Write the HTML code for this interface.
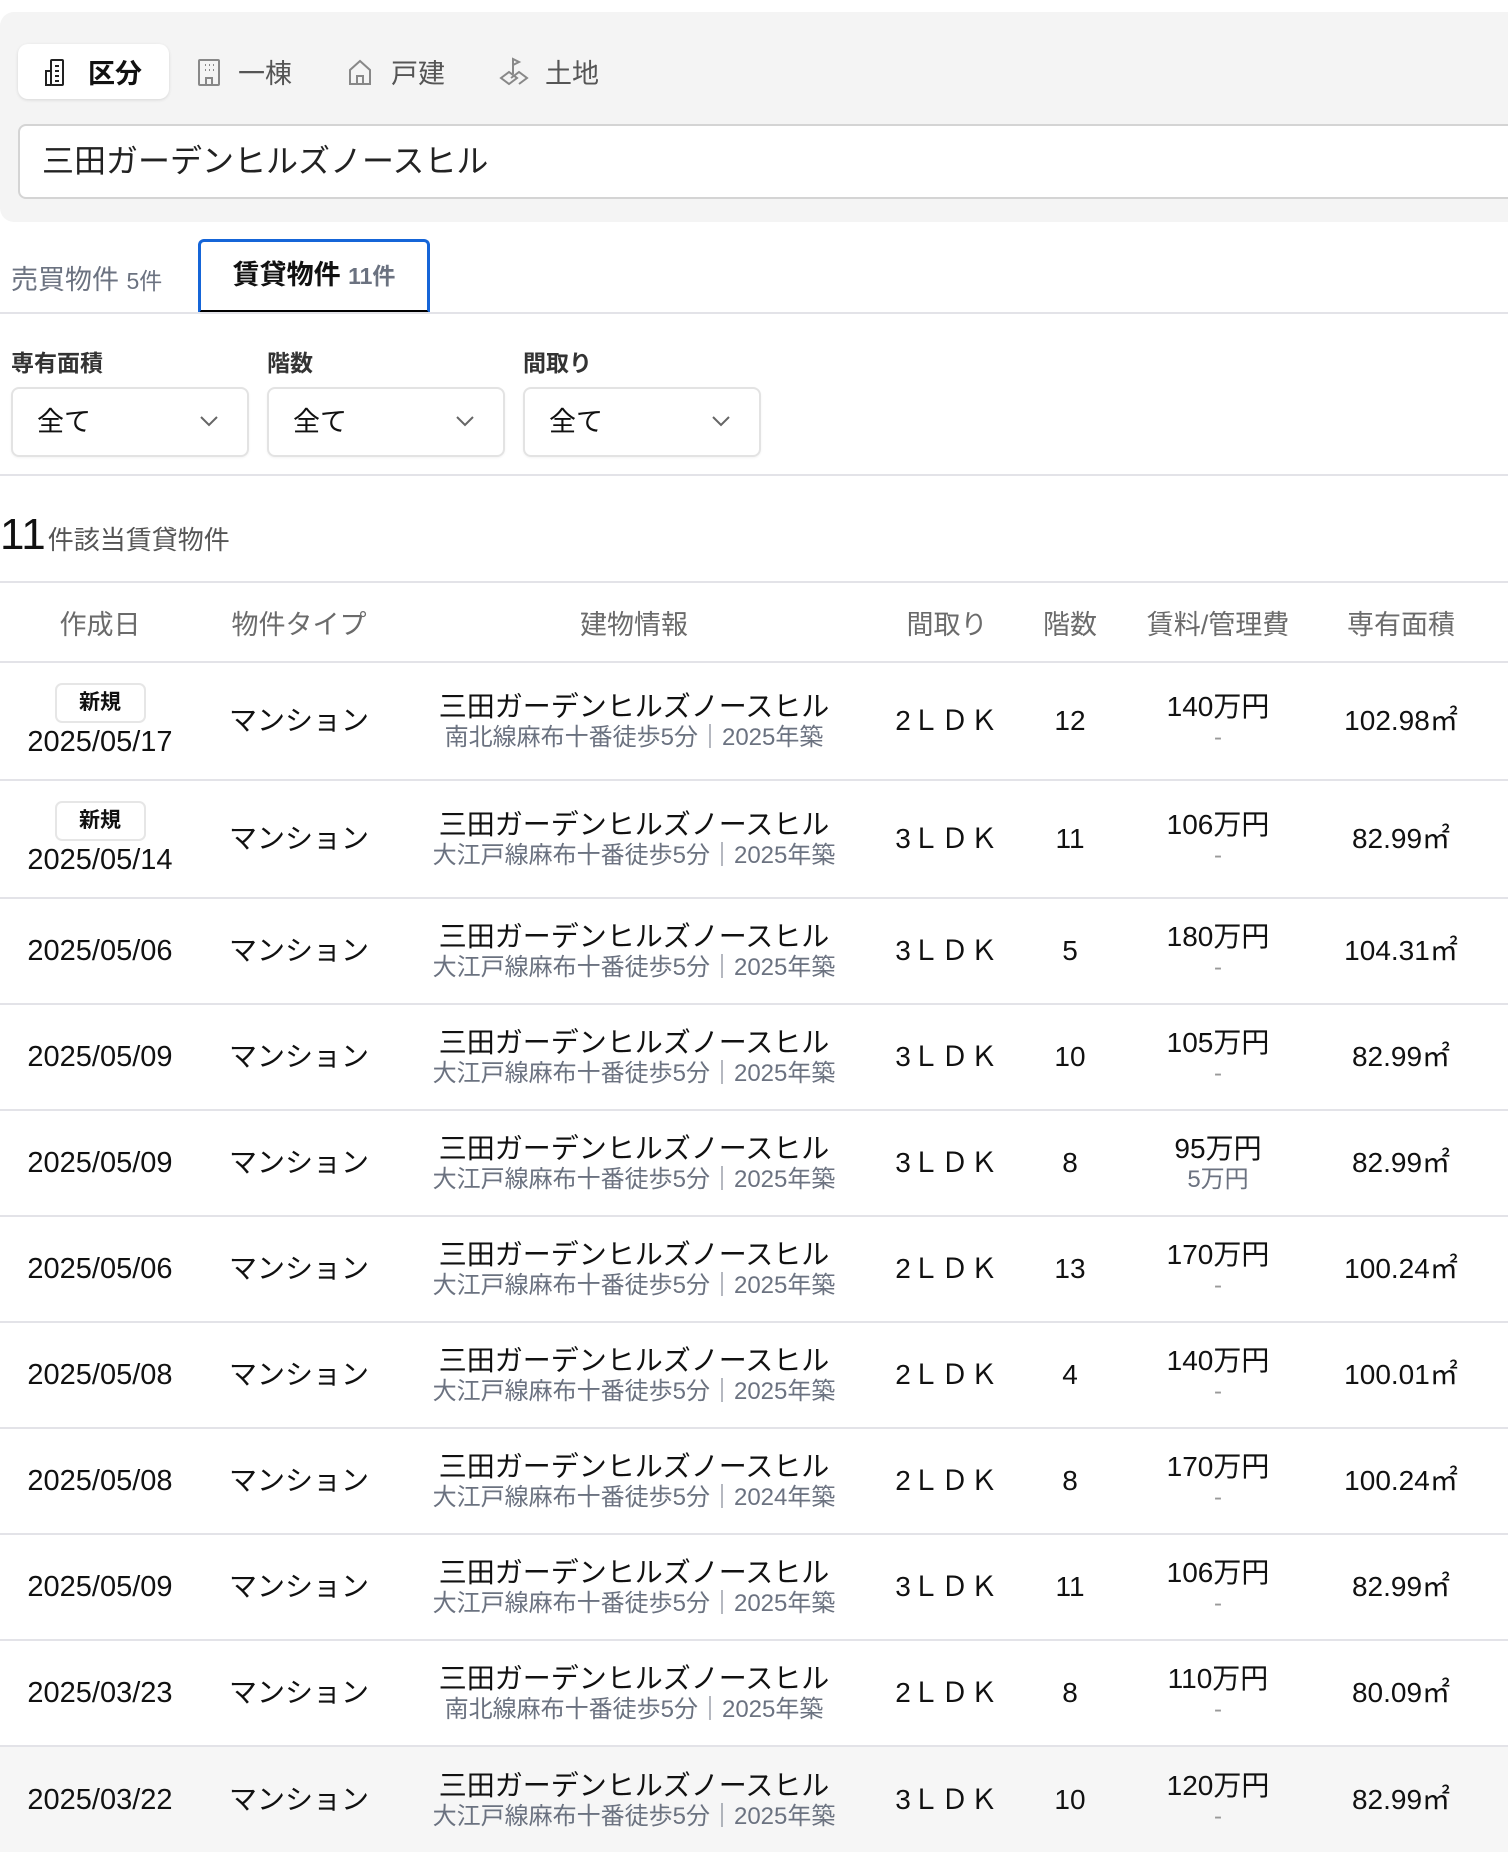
<!DOCTYPE html>
<html><head><meta charset="utf-8"><style>
*{box-sizing:border-box;margin:0;padding:0}
body{width:1508px;height:1852px;overflow:hidden;background:#fff;font-family:"Liberation Sans","Noto Sans CJK JP",sans-serif;color:#111;position:relative}
.panel{position:absolute;left:0;top:12px;width:1530px;height:210px;background:#f4f4f4;border-radius:14px}
.seg{position:absolute;top:44px;height:55px;display:flex;align-items:center;font-size:27px;color:#555}
.seg.act{left:18px;width:151px;background:#fff;border-radius:10px;box-shadow:0 1px 3px rgba(0,0,0,.12);color:#111;font-weight:bold;padding-left:24px}
.seg svg{margin-right:16px}
.search{position:absolute;left:18px;top:124px;width:1520px;height:75px;background:#fff;border:2px solid #d4d4d4;border-radius:8px;font-size:32px;padding-left:22px;line-height:71px;color:#222}
.tab1{position:absolute;left:11px;top:258px;font-size:27px;color:#6b7280}
.tab1 small,.tab2 small{font-size:23px}
.tab2{position:absolute;left:198px;top:239px;width:232px;height:75px;border:3px solid #1565d8;border-bottom:4px solid #000;border-radius:6px 6px 0 0;font-size:27px;font-weight:bold;text-align:center;line-height:66px}
.tab2 small{color:#6b7280}
.hr{position:absolute;left:0;width:1508px;height:2px;background:#e3e3e8}
.lab{position:absolute;top:344px;font-size:23px;font-weight:bold;color:#333}
.sel{position:absolute;top:387px;width:238px;height:70px;border:2px solid #e3e3e3;border-radius:8px;font-size:27px;line-height:66px;padding-left:24px;box-shadow:0 1px 2px rgba(0,0,0,.05)}
.sel svg{position:absolute;right:28px;top:26px}
.cnt{position:absolute;left:0;top:507px;font-size:44px;line-height:56px}
.cnt span{font-size:26px;color:#555;margin-left:2px}
table{position:absolute;left:0;top:581px;width:1600px;border-collapse:collapse;table-layout:fixed}
td,th{text-align:center;vertical-align:middle;border-top:2px solid #e3e3e8;font-weight:normal}
th{height:80px;font-size:27px;color:#6b6b6b}
td{font-size:28px;height:106px;line-height:34px}
td.d{font-size:29px}
tr.n td{height:118px}
tr.g td{background:#f6f6f6}
.sub{display:block;font-size:24px;color:#6b7280;line-height:28px}
.b{display:inline-block;width:91px;height:40px;border:2px solid #e6e6e6;border-radius:7px;font-size:21px;font-weight:bold;line-height:36px;margin-bottom:2px}
.ldk{letter-spacing:1px}
.p .sub{color:#999}
</style></head><body>
<div class="panel"></div>
<div class="seg act"><svg width="30" height="30" viewBox="0 0 30 30" fill="none" stroke="#222" stroke-width="2"><rect x="9" y="3" width="12" height="25" rx="1"/><path d="M9 14H4v14h5M13 9h4M13 14h4M13 19h4M13 24h4"/></svg>区分</div>
<div class="seg" style="left:196px"><svg width="26" height="30" viewBox="0 0 26 30" fill="none" stroke="#888" stroke-width="2"><rect x="3" y="3" width="20" height="25" rx="1"/><path d="M10 28v-7h6v7M9 8h1M13 8h1M17 8h1M9 13h1M13 13h1M17 13h1"/></svg>一棟</div>
<div class="seg" style="left:345px"><svg width="30" height="30" viewBox="0 0 30 30" fill="none" stroke="#888" stroke-width="2"><path d="M5 27V13L15 4l10 9v14zM12 27v-8h6v8"/></svg>戸建</div>
<div class="seg" style="left:497px"><svg width="32" height="32" viewBox="0 0 32 32" fill="none" stroke="#888" stroke-width="2"><path d="M16 18V3l6 3-6 3M4 22l8-6 8 6-8 6zM14 22l8-6 8 6-8 6"/></svg>土地</div>
<div class="search">三田ガーデンヒルズノースヒル</div>
<div class="tab1">売買物件 <small>5件</small></div>
<div class="tab2">賃貸物件 <small>11件</small></div>
<div class="hr" style="top:312px"></div>
<div class="lab" style="left:11px">専有面積</div>
<div class="lab" style="left:267px">階数</div>
<div class="lab" style="left:523px">間取り</div>
<div class="sel" style="left:11px">全て<svg width="20" height="12" viewBox="0 0 20 12" fill="none" stroke="#666" stroke-width="2"><path d="M2 2l8 8 8-8"/></svg></div>
<div class="sel" style="left:267px">全て<svg width="20" height="12" viewBox="0 0 20 12" fill="none" stroke="#666" stroke-width="2"><path d="M2 2l8 8 8-8"/></svg></div>
<div class="sel" style="left:523px">全て<svg width="20" height="12" viewBox="0 0 20 12" fill="none" stroke="#666" stroke-width="2"><path d="M2 2l8 8 8-8"/></svg></div>
<div class="hr" style="top:474px"></div>
<div class="cnt">11<span>件該当賃貸物件</span></div>
<table>
<colgroup><col style="width:200px"><col style="width:198px"><col style="width:472px"><col style="width:154px"><col style="width:92px"><col style="width:204px"><col style="width:162px"><col style="width:118px"></colgroup>
<tr><th>作成日</th><th>物件タイプ</th><th>建物情報</th><th>間取り</th><th>階数</th><th>賃料/管理費</th><th>専有面積</th><th></th></tr>
<tr class="n"><td class="d"><span class="b">新規</span><br>2025/05/17</td><td>マンション</td><td>三田ガーデンヒルズノースヒル<span class="sub">南北線麻布十番徒歩5分｜2025年築</span></td><td class="ldk">2ＬＤＫ</td><td>12</td><td class="p">140万円<span class="sub">-</span></td><td>102.98㎡</td><td></td></tr>
<tr class="n"><td class="d"><span class="b">新規</span><br>2025/05/14</td><td>マンション</td><td>三田ガーデンヒルズノースヒル<span class="sub">大江戸線麻布十番徒歩5分｜2025年築</span></td><td class="ldk">3ＬＤＫ</td><td>11</td><td class="p">106万円<span class="sub">-</span></td><td>82.99㎡</td><td></td></tr>
<tr><td class="d">2025/05/06</td><td>マンション</td><td>三田ガーデンヒルズノースヒル<span class="sub">大江戸線麻布十番徒歩5分｜2025年築</span></td><td class="ldk">3ＬＤＫ</td><td>5</td><td class="p">180万円<span class="sub">-</span></td><td>104.31㎡</td><td></td></tr>
<tr><td class="d">2025/05/09</td><td>マンション</td><td>三田ガーデンヒルズノースヒル<span class="sub">大江戸線麻布十番徒歩5分｜2025年築</span></td><td class="ldk">3ＬＤＫ</td><td>10</td><td class="p">105万円<span class="sub">-</span></td><td>82.99㎡</td><td></td></tr>
<tr><td class="d">2025/05/09</td><td>マンション</td><td>三田ガーデンヒルズノースヒル<span class="sub">大江戸線麻布十番徒歩5分｜2025年築</span></td><td class="ldk">3ＬＤＫ</td><td>8</td><td>95万円<span class="sub">5万円</span></td><td>82.99㎡</td><td></td></tr>
<tr><td class="d">2025/05/06</td><td>マンション</td><td>三田ガーデンヒルズノースヒル<span class="sub">大江戸線麻布十番徒歩5分｜2025年築</span></td><td class="ldk">2ＬＤＫ</td><td>13</td><td class="p">170万円<span class="sub">-</span></td><td>100.24㎡</td><td></td></tr>
<tr><td class="d">2025/05/08</td><td>マンション</td><td>三田ガーデンヒルズノースヒル<span class="sub">大江戸線麻布十番徒歩5分｜2025年築</span></td><td class="ldk">2ＬＤＫ</td><td>4</td><td class="p">140万円<span class="sub">-</span></td><td>100.01㎡</td><td></td></tr>
<tr><td class="d">2025/05/08</td><td>マンション</td><td>三田ガーデンヒルズノースヒル<span class="sub">大江戸線麻布十番徒歩5分｜2024年築</span></td><td class="ldk">2ＬＤＫ</td><td>8</td><td class="p">170万円<span class="sub">-</span></td><td>100.24㎡</td><td></td></tr>
<tr><td class="d">2025/05/09</td><td>マンション</td><td>三田ガーデンヒルズノースヒル<span class="sub">大江戸線麻布十番徒歩5分｜2025年築</span></td><td class="ldk">3ＬＤＫ</td><td>11</td><td class="p">106万円<span class="sub">-</span></td><td>82.99㎡</td><td></td></tr>
<tr><td class="d">2025/03/23</td><td>マンション</td><td>三田ガーデンヒルズノースヒル<span class="sub">南北線麻布十番徒歩5分｜2025年築</span></td><td class="ldk">2ＬＤＫ</td><td>8</td><td class="p">110万円<span class="sub">-</span></td><td>80.09㎡</td><td></td></tr>
<tr class="g"><td class="d">2025/03/22</td><td>マンション</td><td>三田ガーデンヒルズノースヒル<span class="sub">大江戸線麻布十番徒歩5分｜2025年築</span></td><td class="ldk">3ＬＤＫ</td><td>10</td><td class="p">120万円<span class="sub">-</span></td><td>82.99㎡</td><td></td></tr>
</table>
</body></html>
